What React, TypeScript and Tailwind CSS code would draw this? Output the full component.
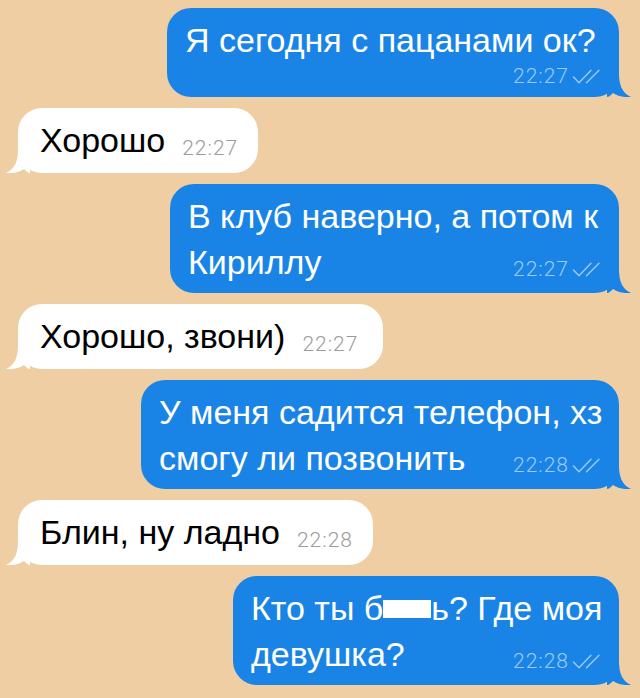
import type { ReactNode } from 'react'

const BLUE = '#1a84e6'

function Checks() {
  return (
    <svg width="30" height="15" viewBox="0 0 30 15" fill="none" stroke="#9ccbf6" strokeWidth="1.4" strokeLinecap="round" strokeLinejoin="round">
      <path d="M1.5 8 L7 13.8 L19 1.2" />
      <path d="M14.5 13.8 L27 1.2" />
    </svg>
  )
}

function Tail({ color, flip }: { color: string; flip?: boolean }) {
  return (
    <svg
      width="24"
      height="24"
      viewBox="0 0 24 24"
      className={flip ? 'absolute bottom-0 left-[-12px] -scale-x-100' : 'absolute bottom-0 right-[-12px]'}
    >
      <path d="M0 0 H12 C12 12 15 20 24 24 C17 24.6 11 23.2 6 20 C4 22 2 24 0 24 Z" fill={color} />
    </svg>
  )
}

function Time({ t, out }: { t: string; out?: boolean }) {
  return (
    <span className={`flex items-center gap-[3px] font-['Roboto',sans-serif] font-light text-[21px] tracking-[1px] leading-none ${out ? 'text-[#9ccbf6]' : 'text-[#9b9b9b]'}`}>
      {t}
      {out && <Checks />}
    </span>
  )
}

function Out({ w, lines, last, time }: { w: string; lines: ReactNode[]; last?: ReactNode; time: string }) {
  return (
    <div className={`relative self-end mr-[21px] ${w} rounded-[24px] bg-[#1a84e6] pl-[18px] pr-[17px] pt-[9px] pb-[8px] text-white`}>
      {lines.map((l, i) => (
        <div key={i} className="h-[46px] whitespace-nowrap">{l}</div>
      ))}
      {last ? (
        <div className="flex h-[46px] items-center justify-between whitespace-nowrap">
          <span>{last}</span>
          <span className="mt-[14px]"><Time t={time} out /></span>
        </div>
      ) : (
        <div className="flex h-[26px] justify-end"><Time t={time} out /></div>
      )}
      <Tail color={BLUE} />
    </div>
  )
}

function In({ w, text, time }: { w: string; text: string; time: string }) {
  return (
    <div className={`relative ml-[18px] ${w} rounded-[24px] bg-white pl-[22px] pt-[9px] pb-[10px] text-black`}>
      <div className="flex h-[46px] items-center gap-[17px] whitespace-nowrap">
        <span>{text}</span>
        <span className="mt-[16px]"><Time t={time} /></span>
      </div>
      <Tail color="#ffffff" flip />
    </div>
  )
}

export default function App() {
  return (
    <div className="flex h-[698px] w-[640px] flex-col gap-[11px] overflow-hidden bg-[#efcea4] pt-[8px] font-['Liberation_Sans',Arial,sans-serif] text-[34px] leading-[46px]">
      <Out w="w-[452px]" lines={['Я сегодня с пацанами ок?']} time="22:27" />
      <In w="w-[240px]" text="Хорошо" time="22:27" />
      <Out w="w-[449px]" lines={['В клуб наверно, а потом к']} last="Кириллу" time="22:27" />
      <In w="w-[365px]" text="Хорошо, звони)" time="22:27" />
      <Out w="w-[478px]" lines={['У меня садится телефон, хз']} last="смогу ли позвонить" time="22:28" />
      <In w="w-[355px]" text="Блин, ну ладно" time="22:28" />
      <Out
        w="w-[386px]"
        lines={[
          <>
            Кто ты б
            <span className="inline-block h-[18px] w-[48px] translate-y-[-2px] bg-white align-middle" />
            ь? Где моя
          </>,
        ]}
        last="девушка?"
        time="22:28"
      />
    </div>
  )
}
